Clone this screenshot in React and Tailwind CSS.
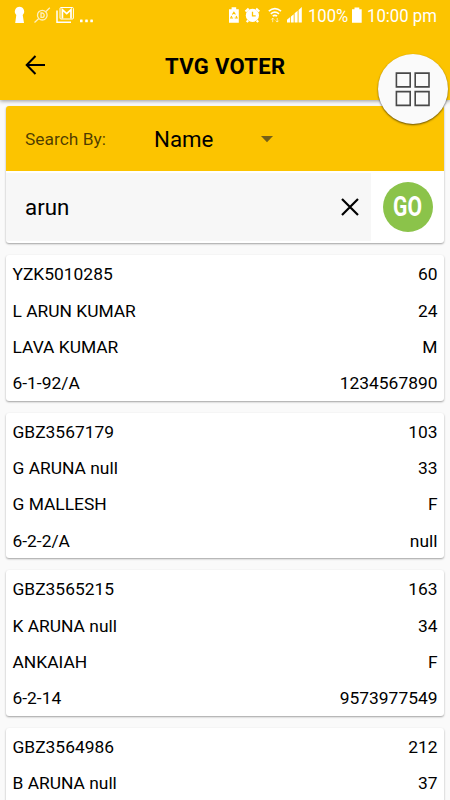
const voters = [
  [["YZK5010285", "60"], ["L ARUN KUMAR", "24"], ["LAVA KUMAR", "M"], ["6-1-92/A", "1234567890"]],
  [["GBZ3567179", "103"], ["G ARUNA null", "33"], ["G MALLESH", "F"], ["6-2-2/A", "null"]],
  [["GBZ3565215", "163"], ["K ARUNA null", "34"], ["ANKAIAH", "F"], ["6-2-14", "9573977549"]],
  [["GBZ3564986", "212"], ["B ARUNA null", "37"], ["", ""], ["", ""]],
];

function NotificationIcons() {
  return (
    <svg className="h-8 w-24" viewBox="0 0 96 32" fill="none">
      <path d="M19.5 6.8a4.7 4.7 0 0 0-3.2 8.1L15.2 23h8.8l-1.3-8.1a4.7 4.7 0 0 0-3.2-8.1Z" fill="#fff" />
      <g stroke="#fff" strokeWidth="1.3" opacity=".75">
        <circle cx="42.3" cy="15.2" r="4.8" />
        <path d="m34.5 22.5 4.3-4M46 11.5l3.8-3.8M41 13h1a2.2 2.2 0 0 1 0 4.4h-1z" />
      </g>
      <g stroke="#fff">
        <path d="M57 10.5v11.8h14" strokeWidth="1.5" />
        <rect x="60" y="7.5" width="13.4" height="11.5" rx="1" strokeWidth="1" />
        <path d="M62.4 18.5V9.6l4.3 4 4.3-4v8.9" strokeWidth="1.7" />
      </g>
      <g fill="#fff">
        <rect x="80" y="19.6" width="2.6" height="2.6" rx=".5" />
        <rect x="85.2" y="19.6" width="2.6" height="2.6" rx=".5" />
        <rect x="90.3" y="19.6" width="2.6" height="2.6" rx=".5" />
      </g>
    </svg>
  );
}

function SystemIcons() {
  return (
    <svg className="h-8 w-[80px]" viewBox="225 0 80 32" fill="none">
      <path d="M229 9.2h2.6V7.3h4.6v1.9h2.6v13.5H229z" fill="#fff" />
      <path d="m232.4 14.5 1.5-2.2 1.5 2.2M236.1 15.9l1 2.1h-2.4M233.1 18h-2.4l1-2.1" stroke="#fcc400" strokeWidth="1.1" />
      <circle cx="252.4" cy="15.4" r="6.6" fill="#fff" />
      <path d="m245.5 11.5 3.2-2.9M259.3 11.5l-3.2-2.9M248.2 20.4l-1.5 1.6M256.7 20.4l1.5 1.6" stroke="#fff" strokeWidth="2.2" />
      <path d="M252.5 11.8v4h3.2" stroke="#fcc400" strokeWidth="1.3" />
      <path d="M268.8 11.2q6.1-5.3 12.2 0M270.8 13.8q4.1-3.4 8.2 0M272.7 16.2q2.2-1.7 4.4 0" stroke="#fff" strokeWidth="1.6" />
      <path d="M272.7 22.2v-4M271.2 19.6l1.5-1.5 1.5 1.5M277.2 18v4M275.7 20.6l1.5 1.5 1.5-1.5" stroke="#fff" opacity=".65" />
      <path d="M287 22.5v-2.7l3.2-2.7v5.4zM291 22.5v-6l2.7-2.3v8.3zM294.6 22.5v-9.2l3-2.6v11.8zM298.6 22.5V9.9l3.2-2.8v15.4z" fill="#fff" />
    </svg>
  );
}

function StatusBar() {
  return (
    <div className="flex h-8 justify-between text-white">
      <NotificationIcons />
      <div className="flex w-[225px] text-[18.5px] leading-8">
        <SystemIcons />
        <span className="ml-[2.5px] w-[42px] origin-left scale-x-[0.9] whitespace-nowrap">100%</span>
        <svg className="h-8 w-[12px]" viewBox="0 0 12 32">
          <path d="M2 9.2h2.5V7.4h4.8v1.8h2.4v13.5H2z" fill="#fff" />
        </svg>
        <span className="ml-[5px] origin-left scale-x-[0.905] whitespace-nowrap">10:00 pm</span>
      </div>
    </div>
  );
}

function VoterCard({ rows }) {
  return (
    <section className="h-[145.5px] shrink-0 rounded-[3px] bg-white px-[6.5px] pt-[1.5px] shadow-[0_1px_2px_rgba(0,0,0,0.36)]">
      {rows.map(([left, right], i) => (
        <div key={i} className="flex h-[36.3px] items-center justify-between text-[17.4px] leading-none">
          <span>{left}</span>
          <span>{right}</span>
        </div>
      ))}
    </section>
  );
}

export default function App() {
  return (
    <div className="relative flex h-[800px] w-[450px] flex-col overflow-hidden bg-[#fafafa] font-[Roboto,sans-serif] text-black">
      <header className="h-[100px] shrink-0 bg-[#fcc400] shadow-[0_1px_4px_rgba(0,0,0,0.4)]">
        <StatusBar />
        <div className="flex h-[68px] items-center">
          <svg className="-mt-[2px] ml-[24px] h-6 w-6" viewBox="0 0 24 24" fill="none" stroke="#000" strokeWidth="2">
            <path d="M21 12H3M11.5 3 2.7 12l8.8 9" />
          </svg>
          <h1 className="ml-[117px] pt-px text-[22px] leading-none font-bold tracking-[0.35px] whitespace-nowrap">TVG VOTER</h1>
        </div>
      </header>

      <main className="flex flex-col gap-3 px-[6px] pt-[6px]">
        <section className="h-[137.3px] shrink-0 overflow-hidden rounded-[3px] bg-white shadow-[0_1px_2px_rgba(0,0,0,0.36)]">
          <div className="flex h-[64.5px] items-center bg-[#fcc400] pt-[3px] pl-[19px]">
            <span className="w-[129px] pb-[2px] text-[17.4px] text-black/70">Search By:</span>
            <span className="w-[107px] text-[22.3px]">Name</span>
            <svg className="h-[7px] w-3" viewBox="0 0 12 7">
              <path d="M0 0h12L6 6.3z" fill="#756018" />
            </svg>
          </div>
          <div className="flex pt-[2.5px]">
            <div className="flex h-[67.5px] w-[365px] items-center justify-between bg-[#f7f7f7] pr-[12px] pl-[19px]">
              <span className="pt-[2px] text-[22.3px]">arun</span>
              <svg className="h-[18px] w-[18px]" viewBox="0 0 18 18" stroke="#000" strokeWidth="2.2">
                <path d="m1 1 16 16M17 1 1 17" />
              </svg>
            </div>
            <button className="mt-[9px] ml-[11.5px] flex h-[50px] w-[50px] items-center justify-center rounded-full bg-[#8bc34a]">
              <span className="scale-x-[0.78] pt-px text-[27px] leading-none font-bold text-white">GO</span>
            </button>
          </div>
        </section>

        {voters.map((rows) => (
          <VoterCard key={rows[0][0]} rows={rows} />
        ))}
      </main>

      <button className="absolute top-[54px] left-[378px] flex h-[69.5px] w-[69.5px] items-center justify-center rounded-full bg-[#fafafa] shadow-[0_1px_2px_rgba(0,0,0,0.6)]">
        <svg className="h-9 w-9" viewBox="0 0 36 36" fill="none" stroke="#484848" strokeWidth="1.6">
          <path d="M1.4 2.1h13.8v13.8H1.4zM20.2 2.1H34v13.8H20.2zM1.4 20.6h13.8v13.8H1.4zM20.2 20.6H34v13.8H20.2z" />
        </svg>
      </button>
    </div>
  );
}
